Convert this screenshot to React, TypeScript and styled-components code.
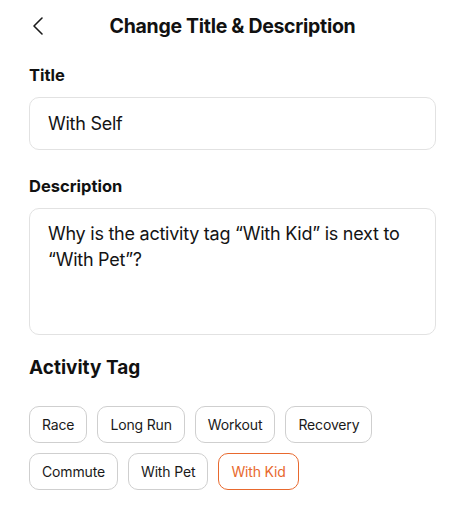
import { FC } from "react";
import styled, { createGlobalStyle } from "styled-components";

const tags = ["Race", "Long Run", "Workout", "Recovery", "Commute", "With Pet", "With Kid"];
const selectedTag = "With Kid";

const App: FC = () => {
  return (
    <>
      <GlobalStyle />
      <Page>
        <Header>
          <BackButton aria-label="Back">
            <svg width="12" height="20" viewBox="0 0 12 20" fill="none">
              <polyline
                points="10,2 2,10 10,18"
                stroke="#1a1a1a"
                strokeWidth="1.6"
                strokeLinecap="round"
                strokeLinejoin="round"
              />
            </svg>
          </BackButton>
          <HeaderTitle>Change Title &amp; Description</HeaderTitle>
        </Header>

        <Label>Title</Label>
        <TitleInput defaultValue="With Self" />

        <Label $gap={25}>Description</Label>
        <DescriptionBox defaultValue={"Why is the activity tag “With Kid” is next to “With Pet”?"} />

        <SectionTitle>Activity Tag</SectionTitle>
        <TagList>
          {tags.map((tag) => (
            <Tag key={tag} $selected={tag === selectedTag}>
              {tag}
            </Tag>
          ))}
        </TagList>
      </Page>
    </>
  );
};

export default App;

const GlobalStyle = createGlobalStyle`
  body {
    margin: 0;
    background: #ffffff;
    font-family: Inter, "Noto Sans", sans-serif;
    color: #111111;
  }
  * {
    box-sizing: border-box;
  }
`;

const Page = styled.div`
  width: 465px;
  padding: 0 29px;
  display: flex;
  flex-direction: column;
`;

const Header = styled.header`
  position: relative;
  height: 52px;
  display: flex;
  align-items: center;
  justify-content: center;
`;

const BackButton = styled.button`
  position: absolute;
  left: 3px;
  top: 16px;
  padding: 0;
  border: none;
  background: none;
  display: flex;
`;

const HeaderTitle = styled.h1`
  margin: 0;
  font-size: 19.5px;
  font-weight: 700;
  letter-spacing: -0.3px;
  color: #111111;
`;

const Label = styled.label<{ $gap?: number }>`
  display: block;
  margin-top: ${({ $gap }) => $gap ?? 12}px;
  font-size: 16.5px;
  font-weight: 700;
  line-height: 22px;
  color: #111111;
`;

const fieldBase = `
  width: 100%;
  margin-top: 11px;
  border: 1px solid #e2e2e2;
  border-radius: 10px;
  background: #ffffff;
  font-family: Inter, "Noto Sans", sans-serif;
  font-size: 18px;
  letter-spacing: -0.25px;
  color: #141414;
  outline: none;
`;

const TitleInput = styled.input`
  ${fieldBase}
  height: 53px;
  padding: 0 18px;
`;

const DescriptionBox = styled.textarea`
  ${fieldBase}
  height: 127px;
  padding: 12px 18px;
  line-height: 26px;
  resize: none;
`;

const SectionTitle = styled.h2`
  margin: 20px 0 0;
  font-size: 19px;
  font-weight: 700;
  line-height: 26px;
  color: #111111;
`;

const TagList = styled.div`
  margin-top: 25px;
  display: flex;
  flex-wrap: wrap;
  gap: 10px;
`;

const Tag = styled.button<{ $selected?: boolean }>`
  height: 37px;
  padding: 0 12px;
  border-radius: 10px;
  border: ${({ $selected }) => ($selected ? "1.5px solid #e8692e" : "1px solid #cfcfcf")};
  background: #ffffff;
  font-family: Inter, "Noto Sans", sans-serif;
  font-size: 14px;
  letter-spacing: -0.15px;
  color: ${({ $selected }) => ($selected ? "#e8692e" : "#1a1a1a")};
`;
